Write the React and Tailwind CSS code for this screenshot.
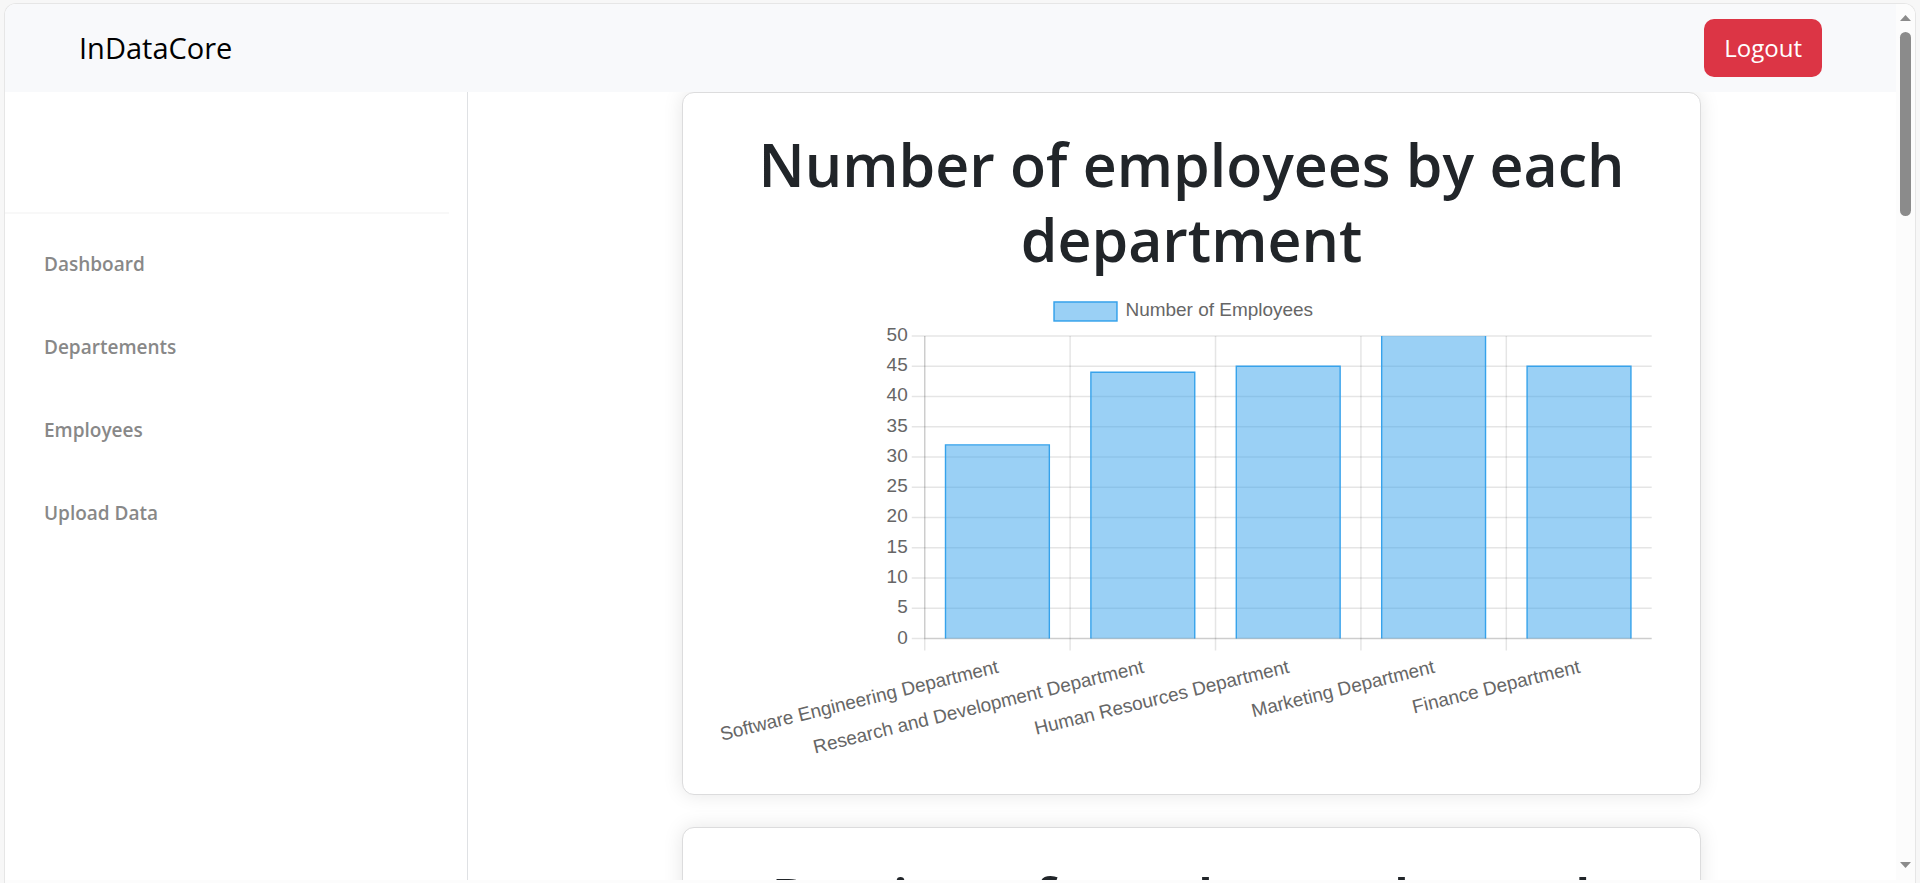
const navItems = ['Dashboard', 'Departements', 'Employees', 'Upload Data'];

const departments = [
  { name: 'Software Engineering Department', count: 32 },
  { name: 'Research and Development Department', count: 44 },
  { name: 'Human Resources Department', count: 45 },
  { name: 'Marketing Department', count: 50 },
  { name: 'Finance Department', count: 45 },
];

const ticks = [0, 5, 10, 15, 20, 25, 30, 35, 40, 45, 50];

const plot = { left: 210, right: 938, top: 45, bottom: 348, max: 50 };
const step = (plot.right - plot.left) / departments.length;
const yFor = (value) => plot.bottom - (value / plot.max) * (plot.bottom - plot.top);

function EmployeesChart() {
  return (
    <svg
      viewBox="0 0 954 472"
      role="img"
      aria-label="Number of employees by department"
      className="block w-full font-['Liberation_Sans',Arial,sans-serif] text-[19px]"
    >
      <rect x="339.5" y="11" width="63" height="19" fill="#9ad0f5" stroke="#36a2eb" strokeWidth="1.5" />
      <text x="411" y="25" fill="#666">Number of Employees</text>

      {ticks.map((t) => (
        <g key={t}>
          <line x1="197" x2={plot.right} y1={yFor(t)} y2={yFor(t)} stroke="#000" strokeOpacity="0.1" strokeWidth="1.5" />
          <text x="193" y={yFor(t) + 5} textAnchor="end" fill="#666">{t}</text>
        </g>
      ))}
      {departments.map((d, i) => (
        <line
          key={d.name}
          x1={plot.left + i * step}
          x2={plot.left + i * step}
          y1={plot.top}
          y2={plot.bottom + 12}
          stroke="#000"
          strokeOpacity="0.1"
          strokeWidth="1.5"
        />
      ))}

      {departments.map((d, i) => {
        const center = plot.left + (i + 0.5) * step;
        const top = yFor(d.count);
        const capped = d.count >= plot.max;
        const l = center - 52;
        const r = center + 52;
        return (
          <g key={d.name}>
            <rect x={l} y={top} width={r - l} height={plot.bottom - top} fill="#36a2eb" fillOpacity="0.5" />
            <path
              d={
                capped
                  ? `M${l} ${plot.bottom}V${top}M${r} ${top}V${plot.bottom}`
                  : `M${l} ${plot.bottom}V${top}H${r}V${plot.bottom}`
              }
              fill="none"
              stroke="#36a2eb"
              strokeWidth="1.4"
            />
            <text
              transform={`translate(${center + 2} 382) rotate(-13.8)`}
              textAnchor="end"
              fill="#666"
            >
              {d.name}
            </text>
          </g>
        );
      })}

      <path
        d={`M${plot.left} ${plot.top}V${plot.bottom}H${plot.right}`}
        fill="none"
        stroke="#000"
        strokeOpacity="0.1"
        strokeWidth="1.5"
      />
    </svg>
  );
}

function Card({ title, children }) {
  return (
    <section className="w-[72.3%] shrink-0 rounded-xl border border-[#dcdcdd] bg-white px-8 pt-[34px] pb-8 shadow-[0_0_20px_rgba(0,0,0,0.1)]">
      <h1 className="mb-[14px] text-center text-[59px] leading-[75px] font-semibold text-[#212529]">{title}</h1>
      {children}
    </section>
  );
}

function Scrollbar() {
  return (
    <div aria-hidden="true" className="flex w-[19px] shrink-0 flex-col items-center bg-[#fcfcfc] pt-[11px] pb-[15px]">
      <svg className="h-[6px] w-[11px]" viewBox="0 0 11 6">
        <path d="M5.5 0L11 6H0z" fill="#8b8b8b" />
      </svg>
      <div className="mt-[11px] h-[184px] w-[11px] rounded-full bg-[#8b8b8b]" />
      <svg className="mt-auto h-[6px] w-[11px]" viewBox="0 0 11 6">
        <path d="M5.5 6L0 0h11z" fill="#8b8b8b" />
      </svg>
    </div>
  );
}

export default function App() {
  return (
    <div className="h-screen overflow-hidden bg-[#f7f7f7] px-1 pt-[3px] font-['Open_Sans','Noto_Sans',sans-serif]">
      <div className="flex h-full overflow-hidden rounded-t-xl border border-b-0 border-[#e6e6e6] bg-white">
        <div className="flex min-w-0 flex-1 flex-col">
          <header className="relative flex h-[88px] shrink-0 items-center justify-between bg-[#f8f9fb] px-[74px]">
            <a href="#" className="text-[29px] leading-10 text-black">InDataCore</a>
            <button type="button" className="h-[58px] rounded-[10px] bg-[#dc3545] px-5 text-2xl text-white">
              Logout
            </button>
          </header>

          <div className="flex min-h-0 flex-1">
            <aside className="w-[463px] shrink-0 border-r border-[#dfe1e4] pr-[18px]">
              <div className="h-[122px] border-b-2 border-[#f8f8f8]" />
              <nav className="flex flex-col gap-[53px] pt-[35px] pl-[39px]">
                {navItems.map((item) => (
                  <a key={item} href="#" className="text-[19px] leading-[30px] font-semibold text-[#888888]">
                    {item}
                  </a>
                ))}
              </nav>
            </aside>

            <main className="flex min-w-0 flex-1 flex-col items-center gap-8 overflow-hidden pl-[19px]">
              <Card title="Number of employees by each department">
                <EmployeesChart />
              </Card>
              <Card title="Portion of employees by each department" />
            </main>
          </div>
          <div className="h-[3px] shrink-0 bg-[#fcfcfc]" />
        </div>
        <Scrollbar />
      </div>
    </div>
  );
}
